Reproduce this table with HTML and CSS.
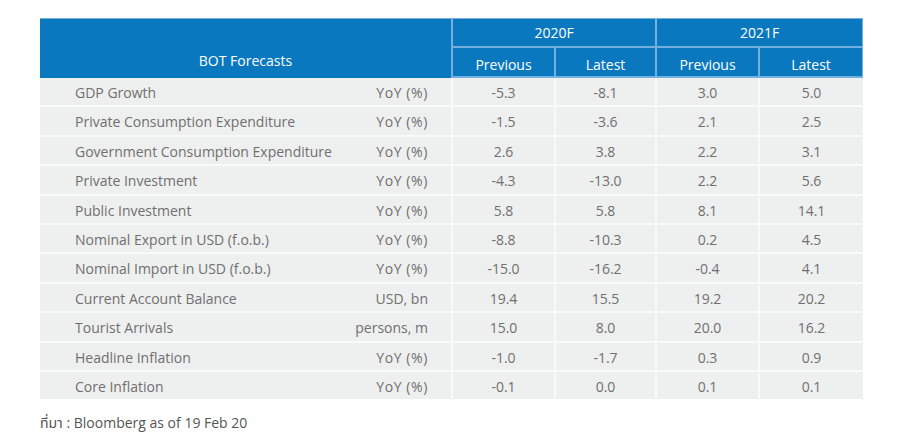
FILE: index.html
```html
<!DOCTYPE html>
<html>
<head>
<meta charset="utf-8">
<link rel="stylesheet" href="styles.css">
</head>
<body>
<div class="wrap">
<table class="fc">
  <colgroup>
    <col class="c-label">
    <col class="c-a">
    <col class="c-b">
    <col class="c-a">
    <col class="c-c">
  </colgroup>
  <thead>
    <tr class="h1">
      <th class="title" rowspan="2">BOT Forecasts</th>
      <th colspan="2">2020F</th>
      <th colspan="2" class="last">2021F</th>
    </tr>
    <tr class="h2">
      <th>Previous</th>
      <th>Latest</th>
      <th>Previous</th>
      <th class="last">Latest</th>
    </tr>
  </thead>
  <tbody>
    <tr><td class="lbl"><span class="name">GDP Growth</span><span class="unit pct">YoY (%)</span></td><td>-5.3</td><td>-8.1</td><td>3.0</td><td class="last">5.0</td></tr>
    <tr><td class="lbl"><span class="name">Private Consumption Expenditure</span><span class="unit pct">YoY (%)</span></td><td>-1.5</td><td>-3.6</td><td>2.1</td><td class="last">2.5</td></tr>
    <tr><td class="lbl"><span class="name">Government Consumption Expenditure</span><span class="unit pct">YoY (%)</span></td><td>2.6</td><td>3.8</td><td>2.2</td><td class="last">3.1</td></tr>
    <tr><td class="lbl"><span class="name">Private Investment</span><span class="unit pct">YoY (%)</span></td><td>-4.3</td><td>-13.0</td><td>2.2</td><td class="last">5.6</td></tr>
    <tr><td class="lbl"><span class="name">Public Investment</span><span class="unit pct">YoY (%)</span></td><td>5.8</td><td>5.8</td><td>8.1</td><td class="last">14.1</td></tr>
    <tr><td class="lbl"><span class="name">Nominal Export in USD (f.o.b.)</span><span class="unit pct">YoY (%)</span></td><td>-8.8</td><td>-10.3</td><td>0.2</td><td class="last">4.5</td></tr>
    <tr><td class="lbl"><span class="name">Nominal Import in USD (f.o.b.)</span><span class="unit pct">YoY (%)</span></td><td>-15.0</td><td>-16.2</td><td>-0.4</td><td class="last">4.1</td></tr>
    <tr><td class="lbl"><span class="name">Current Account Balance</span><span class="unit">USD, bn</span></td><td>19.4</td><td>15.5</td><td>19.2</td><td class="last">20.2</td></tr>
    <tr><td class="lbl"><span class="name">Tourist Arrivals</span><span class="unit">persons, m</span></td><td>15.0</td><td>8.0</td><td>20.0</td><td class="last">16.2</td></tr>
    <tr><td class="lbl"><span class="name">Headline Inflation</span><span class="unit pct">YoY (%)</span></td><td>-1.0</td><td>-1.7</td><td>0.3</td><td class="last">0.9</td></tr>
    <tr class="end"><td class="lbl"><span class="name">Core Inflation</span><span class="unit pct">YoY (%)</span></td><td>-0.1</td><td>0.0</td><td>0.1</td><td class="last">0.1</td></tr>
  </tbody>
</table>
<p class="source">ที่มา : Bloomberg as of 19 Feb 20</p>
</div>
</body>
</html>
```
FILE: styles.css
```css
html, body {
  margin: 0;
  padding: 0;
  background: #ffffff;
}
body {
  font-family: "Open Sans", "Noto Sans", "Noto Sans Thai", sans-serif;
  font-size: 14px;
  color: #707070;
}
.wrap {
  padding: 18px 0 0 40px;
}
.fc {
  border-collapse: separate;
  border-spacing: 0;
  width: 823px;
  table-layout: fixed;
}
.c-label { width: 413px; }
.c-a { width: 103px; }
.c-b { width: 101px; }
.c-c { width: 103px; }
.fc th {
  background: #0a78bf;
  color: #ffffff;
  font-weight: normal;
  padding: 0;
  text-align: center;
  border-right: 2px solid #74b0dd;
  border-bottom: 2px solid #74b0dd;
}
.fc th.last {
  border-right: 1px solid #74b0dd;
}
.fc .h1 th {
  border-top: 1px solid #74b0dd;
  height: 27px;
  line-height: 27px;
}
.fc .h2 th {
  height: 22px;
  line-height: 22px;
  padding-top: 6px;
}
.fc th.title {
  vertical-align: bottom;
  border-top: 1px solid #74b0dd;
  border-bottom: 0;
  padding-bottom: 7px;
  line-height: 20px;
  height: auto;
}
.fc td {
  background: #eeefef;
  text-align: center;
  padding: 2px 0 0 0;
  height: 25.4px;
  line-height: 25.4px;
  border-right: 2px solid #f9f9f9;
  border-bottom: 2px solid #f9f9f9;
}
.fc td.last {
  border-right: 0;
}
.fc tr.end td {
  border-bottom: 0;
}
.fc td.lbl {
  text-align: left;
}
.name {
  float: left;
  padding-left: 35px;
}
.unit {
  float: right;
  padding-right: 23px;
}
.unit.pct {
  letter-spacing: 0.6px;
}
.source {
  margin: 14px 0 0 0;
  color: #555555;
  font-size: 14px;
  line-height: 20px;
}
```
